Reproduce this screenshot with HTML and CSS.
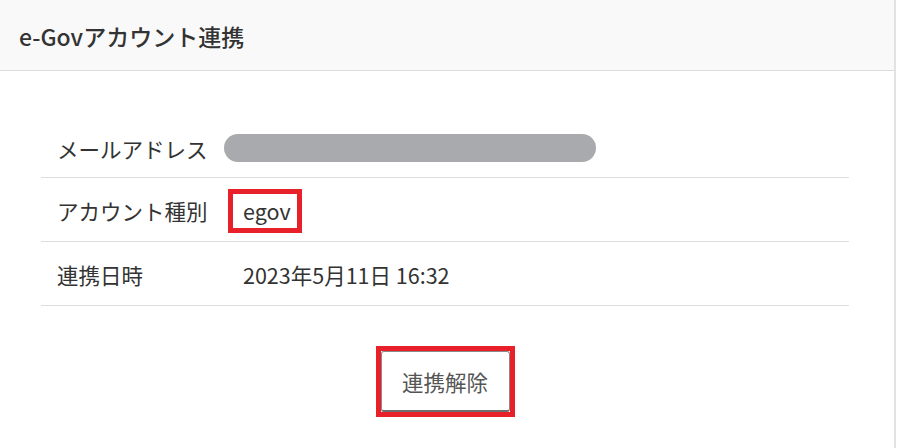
FILE: index.html
```html
<!DOCTYPE html>
<html lang="ja">
<head>
<meta charset="utf-8">
<title>e-Govアカウント連携</title>
<link rel="stylesheet" href="styles.css">
</head>
<body>
<div class="card">
  <div class="card-header">
    <h1 class="title">e-Govアカウント連携</h1>
  </div>
  <div class="card-body">
    <div class="info">
      <div class="row row-first">
        <div class="label">メールアドレス</div>
        <div class="value"><span class="masked"></span></div>
      </div>
      <div class="row">
        <div class="label">アカウント種別</div>
        <div class="value"><span class="mark-box">egov</span></div>
      </div>
      <div class="row">
        <div class="label">連携日時</div>
        <div class="value value-text">2023年5月11日 16:32</div>
      </div>
    </div>
    <div class="actions">
      <div class="mark-button">
        <button class="btn" type="button">連携解除</button>
      </div>
    </div>
  </div>
</div>
</body>
</html>
```

FILE: styles.css
```css
html, body {
  margin: 0;
  padding: 0;
  background: #ffffff;
}
body {
  font-family: "Noto Sans CJK JP", "Noto Sans", sans-serif;
  color: #333333;
  overflow: hidden;
}
.card {
  width: 894px;
  height: 448px;
  border-right: 2px solid #e2e2e2;
  background: #ffffff;
}
.card-header {
  height: 70px;
  background: #f9f9f9;
  border-bottom: 1px solid #dcdcdc;
  display: flex;
  align-items: center;
  padding-left: 19px;
}
.title {
  margin: 0;
  font-size: 23px;
  font-weight: 500;
  color: #333333;
  line-height: 1;
  padding-top: 2px;
}
.card-body {
  padding: 43px 45px 0 41px;
}
.info {
  display: flex;
  flex-direction: column;
}
.row {
  box-sizing: border-box;
  display: flex;
  align-items: center;
  height: 64px;
  padding-top: 3px;
  border-bottom: 1px solid #dddddd;
}
.row-first {
  padding-top: 6px;
}
.label {
  width: 167px;
  padding-left: 16px;
  font-size: 21.5px;
  line-height: 1;
  color: #333333;
}
.value {
  display: flex;
  align-items: center;
  font-size: 21.5px;
  line-height: 1;
}
.value-text {
  padding-left: 19px;
}
.masked {
  display: block;
  width: 372px;
  height: 28px;
  border-radius: 14px;
  background: #a9aaad;
  margin-top: -2px;
}
.mark-box {
  display: inline-flex;
  align-items: center;
  box-sizing: border-box;
  height: 44px;
  width: 74px;
  margin-left: 4px;
  margin-top: -1px;
  padding-left: 10px;
  border: 5px solid #e8202a;
}
.actions {
  display: flex;
  justify-content: center;
  padding-top: 40px;
}
.mark-button {
  border: 5px solid #e8202a;
  display: flex;
}
.btn {
  box-sizing: border-box;
  width: 129px;
  height: 61px;
  border: 1px solid #8a8a8a;
  border-bottom: 2px solid #6e6e6e;
  border-radius: 3px;
  background: #ffffff;
  font-family: "Noto Sans CJK JP", "Noto Sans", sans-serif;
  font-size: 21.5px;
  color: #555555;
  padding: 0;
}
```
